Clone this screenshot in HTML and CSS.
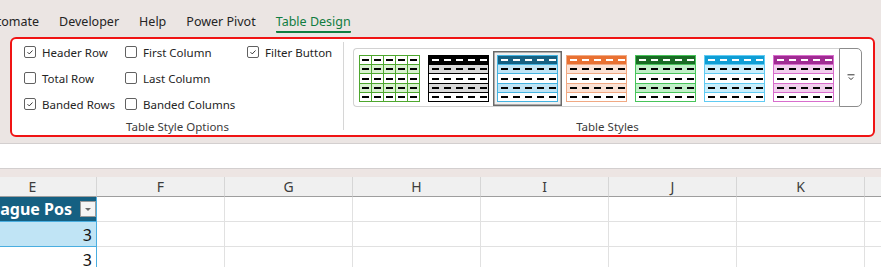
FILE: index.html
```html
<!DOCTYPE html>
<html lang="en">
<head>
  <meta charset="UTF-8" />
  <title>Table Design</title>
  <link rel="stylesheet" href="styles.css">
</head>
<body>

<div class="top">
  <nav class="tabs">
    <span class="tab tab-cut">Automate</span>
    <span class="tab">Developer</span>
    <span class="tab">Help</span>
    <span class="tab">Power Pivot</span>
    <span class="tab active"><b>Table Design</b></span>
  </nav>

  <section class="ribbon">
    <div class="group options">
      <div class="checks">
        <label class="check"><span class="box on"><svg viewBox="0 0 12 12"><path d="M3 6.2l2.1 2.1L9 4.2"/></svg></span>Header Row</label>
        <label class="check"><span class="box"></span>Total Row</label>
        <label class="check"><span class="box on"><svg viewBox="0 0 12 12"><path d="M3 6.2l2.1 2.1L9 4.2"/></svg></span>Banded Rows</label>
        <label class="check"><span class="box"></span>First Column</label>
        <label class="check"><span class="box"></span>Last Column</label>
        <label class="check"><span class="box"></span>Banded Columns</label>
        <label class="check"><span class="box on"><svg viewBox="0 0 12 12"><path d="M3 6.2l2.1 2.1L9 4.2"/></svg></span>Filter Button</label>
      </div>
      <div class="group-label">Table Style Options</div>
    </div>

    <div class="sep"></div>

    <div class="group styles">
      <div class="gallery-row">
        <div class="gallery">
          <div class="thumb grid t-lightgreen"><i></i><i></i><i></i><i></i><i></i></div>
          <div class="thumb head t-black"><i></i><i></i><i></i><i></i><i></i></div>
          <div class="thumb head t-blue sel"><i></i><i></i><i></i><i></i><i></i></div>
          <div class="thumb head t-orange"><i></i><i></i><i></i><i></i><i></i></div>
          <div class="thumb head t-green"><i></i><i></i><i></i><i></i><i></i></div>
          <div class="thumb head t-cyan"><i></i><i></i><i></i><i></i><i></i></div>
          <div class="thumb head t-purple"><i></i><i></i><i></i><i></i><i></i></div>
        </div>
        <button class="more">
          <svg viewBox="0 0 8 7" width="8" height="7"><path d="M0.5 0.8H7.5M1.8 3.4L4 5.6 6.2 3.4"/></svg>
        </button>
      </div>
      <div class="group-label">Table Styles</div>
    </div>
  </section>
</div>

<div class="formula"></div>
<div class="strip"></div>

<div class="sheet">
  <div class="colhead">E</div>
  <div class="colhead">F</div>
  <div class="colhead">G</div>
  <div class="colhead">H</div>
  <div class="colhead">I</div>
  <div class="colhead">J</div>
  <div class="colhead">K</div>
  <div class="colhead"></div>

  <div class="cell tbl tbl-head">
    <span class="head-text">League Pos</span>
    <span class="filter"><svg viewBox="0 0 14 14" width="14" height="14"><path d="M4 6h6l-3 3z"/></svg></span>
  </div>
  <div class="cell"></div><div class="cell"></div><div class="cell"></div><div class="cell"></div><div class="cell"></div><div class="cell"></div><div class="cell"></div>

  <div class="cell tbl band num">3</div>
  <div class="cell"></div><div class="cell"></div><div class="cell"></div><div class="cell"></div><div class="cell"></div><div class="cell"></div><div class="cell"></div>

  <div class="cell tbl num">3</div>
  <div class="cell"></div><div class="cell"></div><div class="cell"></div><div class="cell"></div><div class="cell"></div><div class="cell"></div><div class="cell"></div>
</div>

</body>
</html>
```

FILE: styles.css
```css
body {
  margin: 0;
  background: #fff;
  font-family: 'Noto Sans', sans-serif;
  color: #242424;
  overflow: hidden;
}

.top {
  background: #ebe5e3;
  padding-bottom: 6px;
}

.tabs {
  display: flex;
  height: 37px;
  font-size: 12.5px;
  white-space: nowrap;
}

.tab {
  padding: 12px 10px 0;
  line-height: 19px;
  color: #242424;
}

.tab-cut {
  margin-left: -29px;
}

.tab.active {
  color: #107c41;
}

.tab.active b {
  display: inline-block;
  font-weight: normal;
  border-bottom: 2px solid #107c41;
  border-radius: 1px;
}

.ribbon {
  display: flex;
  margin-left: 10px;
  width: 865px;
  height: 100px;
  box-sizing: border-box;
  border: 2px solid #f01414;
  border-radius: 6px;
  background: #fff;
}

.group {
  display: flex;
  flex-direction: column;
}

.group-label {
  height: 18px;
  line-height: 19px;
  font-size: 11.5px;
  text-align: center;
  color: #3b3b3b;
  margin-top: auto;
}

.options {
  width: 331px;
}

.checks {
  display: grid;
  grid-template-columns: 101px 122px auto;
  grid-template-rows: repeat(3, 26px);
  grid-auto-flow: column;
  padding-left: 12px;
}

.check {
  display: flex;
  align-items: center;
  gap: 6px;
  font-size: 11.5px;
  color: #242424;
  white-space: nowrap;
}

.box {
  width: 12px;
  height: 12px;
  box-sizing: border-box;
  border: 1px solid #616161;
  border-radius: 2px;
  display: flex;
}

.box svg {
  width: 10px;
  height: 10px;
  fill: none;
  stroke: #242424;
  stroke-width: 1.1;
}

.sep {
  width: 1px;
  background: #d6d6d6;
  margin: 3px 0 5px;
}

.styles {
  margin-left: 9px;
  width: 509px;
}

.gallery-row {
  display: flex;
  margin-top: 9px;
  height: 59px;
}

.gallery {
  display: flex;
  gap: 8px;
  width: 486px;
  box-sizing: border-box;
  padding: 6px 4px 0 5px;
  border: 1px solid #d2d2d2;
  border-right: 0;
  border-radius: 4px 0 0 4px;
}

.more {
  width: 23px;
  height: 59px;
  padding: 0;
  box-sizing: border-box;
  border: 1px solid #8c8c8c;
  border-radius: 0 5px 5px 0;
  background: #fff;
  display: flex;
  align-items: center;
  justify-content: center;
}

.more svg {
  fill: none;
  stroke: #333;
  stroke-width: 1;
}

/* table style thumbnails */
.thumb {
  --dash: #000;
  --row: #fff;
  width: 61px;
  height: 47px;
  box-sizing: border-box;
  border: 1.5px solid var(--line);
  display: flex;
  flex-direction: column;
  background: #fff;
}

.thumb i {
  flex: 1;
  border-top: 1px solid var(--line);
  background: linear-gradient(90deg, var(--dash) 7px, transparent 7px) 3px 50% / 12px 2px repeat-x, var(--row);
}

.thumb i:first-child {
  border-top: 0;
}

.thumb i:nth-child(even) {
  --row: var(--band);
}

.thumb.head i:first-child {
  --row: var(--head);
  --dash: #fff;
}

.thumb.grid i {
  background:
    linear-gradient(90deg, var(--dash) 7px, transparent 7px) 2px 50% / 12px 2px repeat-x,
    linear-gradient(90deg, transparent 11px, var(--line) 11px) 0 0 / 12px 100% repeat-x,
    var(--row);
}

.thumb.sel {
  box-shadow: 0 0 0 2.5px #f0f0f0, 0 0 0 4px #6a6a6a;
}

.t-lightgreen { --line: #4ea72e; --band: #d9f2d0; }
.t-black { --line: #000; --head: #000; --band: #d9d9d9; }
.t-blue { --line: #44b3e1; --head: #156082; --band: #c0e4f5; }
.t-orange { --line: #f1a983; --head: #e97132; --band: #fbe2d5; }
.t-green { --line: #47c45a; --head: #196b24; --band: #c1f0c8; }
.t-cyan { --line: #61cbf3; --head: #0f9ed5; --band: #caeefb; }
.t-purple { --line: #d86dcd; --head: #a02b93; --band: #f2cfee; }

/* sheet */
.formula {
  height: 24px;
  border-top: 1px solid #d3cfcf;
  border-bottom: 1px solid #d3cfcf;
  background: #fff;
}

.strip {
  height: 8px;
  background: #ede5e3;
}

.sheet {
  display: grid;
  grid-template-columns: repeat(8, 128px);
  grid-template-rows: 20px;
  grid-auto-rows: 25px;
  margin-left: -31px;
}

.colhead {
  box-sizing: border-box;
  background: #f0f0f0;
  border-right: 1px solid #d6d6d6;
  border-bottom: 1px solid #9e9e9e;
  font-size: 14px;
  line-height: 19px;
  text-align: center;
  color: #3c3c3c;
}

.cell {
  box-sizing: border-box;
  border-right: 1px solid #e1e1e1;
  border-bottom: 1px solid #e1e1e1;
}

.tbl {
  border-right-color: #4aaee0;
  border-bottom-color: #4aaee0;
}

.tbl-head {
  background: #156082;
  display: flex;
  align-items: center;
  justify-content: flex-end;
  overflow: hidden;
}

.head-text {
  color: #fff;
  font-weight: bold;
  font-size: 16px;
  white-space: nowrap;
  margin-right: 8px;
}

.filter {
  width: 16px;
  height: 16px;
  box-sizing: border-box;
  border: 1px solid #9a9a9a;
  background: #f4f4f4;
  display: flex;
  align-items: center;
  justify-content: center;
  flex-shrink: 0;
}

.filter svg {
  fill: #6a6a6a;
}

.band {
  background: #c0e4f5;
}

.num {
  text-align: right;
  font-size: 16px;
  line-height: 26px;
  padding-right: 4px;
  color: #111;
}
```
